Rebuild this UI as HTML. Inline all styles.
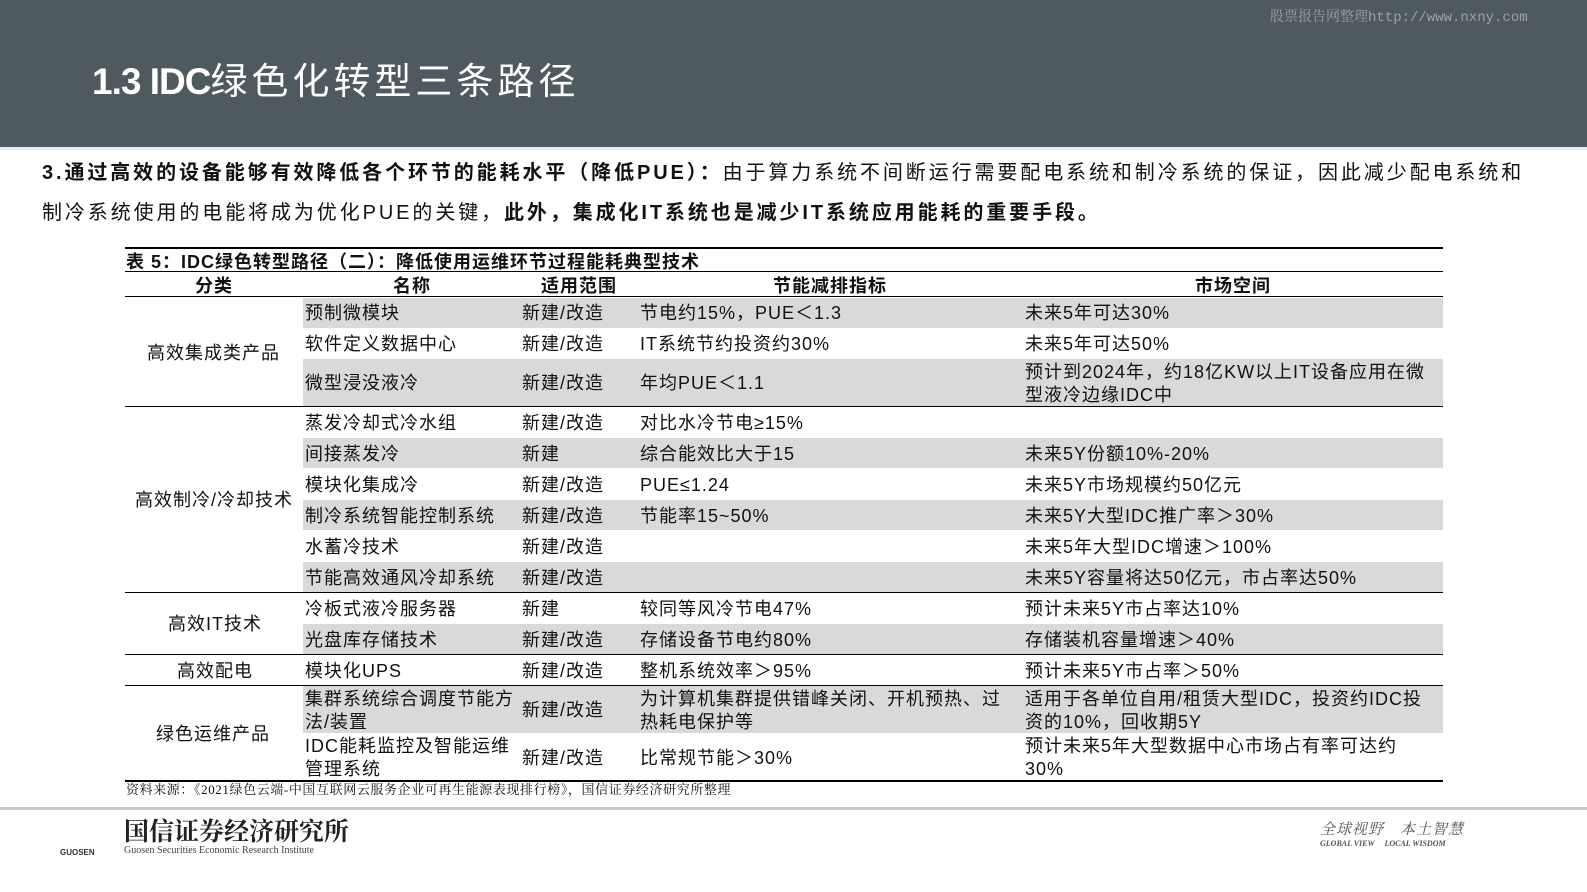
<!DOCTYPE html>
<html><head><meta charset="utf-8"><style>
*{margin:0;padding:0;box-sizing:border-box}
body{width:1587px;height:892px;position:relative;background:#fff;font-family:"Liberation Sans","Noto Sans CJK SC",sans-serif;color:#111;overflow:hidden}
.a{position:absolute;white-space:nowrap;line-height:1.1}
.hdr{position:absolute;left:0;top:0;width:1587px;height:147px;background:#4f5960}
.g{position:absolute;left:303px;width:1140px;background:#d9d9d9}
.ln{position:absolute;left:125px;width:1318px;background:#000}
.c{position:absolute;font-size:18px;line-height:22px;white-space:nowrap;letter-spacing:1px}
.th{position:absolute;font-size:18px;font-weight:bold;top:275px;line-height:22px;letter-spacing:1px}
</style></head><body>
<div class="hdr"></div>
<div class="a" style="left:1270px;top:11px;font-size:14px;color:#9aa3a8;font-family:'Liberation Mono','Noto Serif CJK SC',monospace">股票报告网整理http://www.nxny.com</div>
<div class="a" style="left:92px;top:62px;font-size:37px;color:#fff;font-weight:bold;letter-spacing:-1px">1.3 IDC<span style="font-weight:normal;letter-spacing:4px">绿色化转型三条路径</span></div>
<div class="a" style="left:0;top:147px;width:1587px;height:3px;background:#e8ecee"></div>
<div class="a" style="left:42px;top:160px;font-size:20px;line-height:26px;letter-spacing:2.9px"><b>3.通过高效的设备能够有效降低各个环节的能耗水平（降低PUE）：</b>由于算力系统不间断运行需要配电系统和制冷系统的保证，因此减少配电系统和</div>
<div class="a" style="left:42px;top:200px;font-size:20px;line-height:26px;letter-spacing:2.9px">制冷系统使用的电能将成为优化PUE的关键，<b>此外，集成化IT系统也是减少IT系统应用能耗的重要手段。</b></div>

<div class="ln" style="top:247px;height:2px"></div>
<div class="a" style="left:126px;top:251px;font-size:18px;font-weight:bold;line-height:22px;letter-spacing:1px">表 5：IDC绿色转型路径（二）：降低使用运维环节过程能耗典型技术</div>
<div class="ln" style="top:271px;height:1px"></div>
<div class="th" style="left:195px">分类</div>
<div class="th" style="left:393px">名称</div>
<div class="th" style="left:541px">适用范围</div>
<div class="th" style="left:773px">节能减排指标</div>
<div class="th" style="left:1195px">市场空间</div>
<div class="ln" style="top:296px;height:1px"></div>

<div class="g" style="top:298px;height:30px"></div>
<div class="g" style="top:359px;height:47px"></div>
<div class="g" style="top:438px;height:30px"></div>
<div class="g" style="top:500px;height:30px"></div>
<div class="g" style="top:562px;height:30px"></div>
<div class="g" style="top:624px;height:30px"></div>
<div class="g" style="top:686px;height:47px"></div>

<div class="ln" style="top:406px;height:1px"></div>
<div class="ln" style="top:592px;height:1px"></div>
<div class="ln" style="top:654px;height:1px"></div>
<div class="ln" style="top:685px;height:1px"></div>
<div class="ln" style="top:780px;height:2px"></div>

<div class="c" style="left:147px;top:342px">高效集成类产品</div>
<div class="c" style="left:135px;top:489px">高效制冷/冷却技术</div>
<div class="c" style="left:168px;top:613px">高效IT技术</div>
<div class="c" style="left:177px;top:660px">高效配电</div>
<div class="c" style="left:156px;top:723px">绿色运维产品</div>

<div class="c" style="left:305px;top:302px">预制微模块</div><div class="c" style="left:522px;top:302px">新建/改造</div><div class="c" style="left:640px;top:302px">节电约15%，PUE＜1.3</div><div class="c" style="left:1025px;top:302px">未来5年可达30%</div>
<div class="c" style="left:305px;top:333px">软件定义数据中心</div><div class="c" style="left:522px;top:333px">新建/改造</div><div class="c" style="left:640px;top:333px">IT系统节约投资约30%</div><div class="c" style="left:1025px;top:333px">未来5年可达50%</div>
<div class="c" style="left:305px;top:372px">微型浸没液冷</div><div class="c" style="left:522px;top:372px">新建/改造</div><div class="c" style="left:640px;top:372px">年均PUE＜1.1</div><div class="c" style="left:1025px;top:361px;line-height:23px">预计到2024年，约18亿KW以上IT设备应用在微<br>型液冷边缘IDC中</div>
<div class="c" style="left:305px;top:412px">蒸发冷却式冷水组</div><div class="c" style="left:522px;top:412px">新建/改造</div><div class="c" style="left:640px;top:412px">对比水冷节电≥15%</div>
<div class="c" style="left:305px;top:443px">间接蒸发冷</div><div class="c" style="left:522px;top:443px">新建</div><div class="c" style="left:640px;top:443px">综合能效比大于15</div><div class="c" style="left:1025px;top:443px">未来5Y份额10%-20%</div>
<div class="c" style="left:305px;top:474px">模块化集成冷</div><div class="c" style="left:522px;top:474px">新建/改造</div><div class="c" style="left:640px;top:474px">PUE≤1.24</div><div class="c" style="left:1025px;top:474px">未来5Y市场规模约50亿元</div>
<div class="c" style="left:305px;top:505px">制冷系统智能控制系统</div><div class="c" style="left:522px;top:505px">新建/改造</div><div class="c" style="left:640px;top:505px">节能率15~50%</div><div class="c" style="left:1025px;top:505px">未来5Y大型IDC推广率＞30%</div>
<div class="c" style="left:305px;top:536px">水蓄冷技术</div><div class="c" style="left:522px;top:536px">新建/改造</div><div class="c" style="left:1025px;top:536px">未来5年大型IDC增速＞100%</div>
<div class="c" style="left:305px;top:567px">节能高效通风冷却系统</div><div class="c" style="left:522px;top:567px">新建/改造</div><div class="c" style="left:1025px;top:567px">未来5Y容量将达50亿元，市占率达50%</div>
<div class="c" style="left:305px;top:598px">冷板式液冷服务器</div><div class="c" style="left:522px;top:598px">新建</div><div class="c" style="left:640px;top:598px">较同等风冷节电47%</div><div class="c" style="left:1025px;top:598px">预计未来5Y市占率达10%</div>
<div class="c" style="left:305px;top:629px">光盘库存储技术</div><div class="c" style="left:522px;top:629px">新建/改造</div><div class="c" style="left:640px;top:629px">存储设备节电约80%</div><div class="c" style="left:1025px;top:629px">存储装机容量增速＞40%</div>
<div class="c" style="left:305px;top:660px">模块化UPS</div><div class="c" style="left:522px;top:660px">新建/改造</div><div class="c" style="left:640px;top:660px">整机系统效率＞95%</div><div class="c" style="left:1025px;top:660px">预计未来5Y市占率＞50%</div>
<div class="c" style="left:305px;top:688px;line-height:23px">集群系统综合调度节能方<br>法/装置</div><div class="c" style="left:522px;top:699px">新建/改造</div><div class="c" style="left:640px;top:688px;line-height:23px">为计算机集群提供错峰关闭、开机预热、过<br>热耗电保护等</div><div class="c" style="left:1025px;top:688px;line-height:23px">适用于各单位自用/租赁大型IDC，投资约IDC投<br>资的10%，回收期5Y</div>
<div class="c" style="left:305px;top:735px;line-height:23px">IDC能耗监控及智能运维<br>管理系统</div><div class="c" style="left:522px;top:747px">新建/改造</div><div class="c" style="left:640px;top:747px">比常规节能＞30%</div><div class="c" style="left:1025px;top:735px;line-height:23px">预计未来5年大型数据中心市场占有率可达约<br>30%</div>

<div class="a" style="left:126px;top:783px;font-size:13px;font-family:'Liberation Serif','Noto Serif CJK SC',serif;letter-spacing:0.6px">资料来源：《2021绿色云端-中国互联网云服务企业可再生能源表现排行榜》，国信证券经济研究所整理</div>
<div class="a" style="left:0;top:807px;width:1587px;height:3px;background:#c8c8c8"></div>
<div class="a" style="left:124px;top:820px;font-size:25px;line-height:25px;font-weight:bold;font-family:'Liberation Serif','Noto Serif CJK SC',serif;color:#222">国信证券经济研究所</div>
<div class="a" style="left:60px;top:849px;font-size:8px;font-weight:bold;color:#333">GUOSEN</div>
<div class="a" style="left:124px;top:846px;font-size:10px;line-height:10px;color:#444;font-family:'Liberation Serif',serif">Guosen Securities Economic Research Institute</div>
<div class="a" style="left:1320px;top:821px;font-size:15px;line-height:15px;font-style:italic;color:#555;font-family:'Noto Serif CJK SC',serif;letter-spacing:1px">全球视野　本土智慧</div>
<div class="a" style="left:1320px;top:840px;font-size:8px;font-weight:bold;font-style:italic;color:#555;font-family:'Liberation Serif',serif">GLOBAL VIEW　 LOCAL WISDOM</div>
</body></html>
